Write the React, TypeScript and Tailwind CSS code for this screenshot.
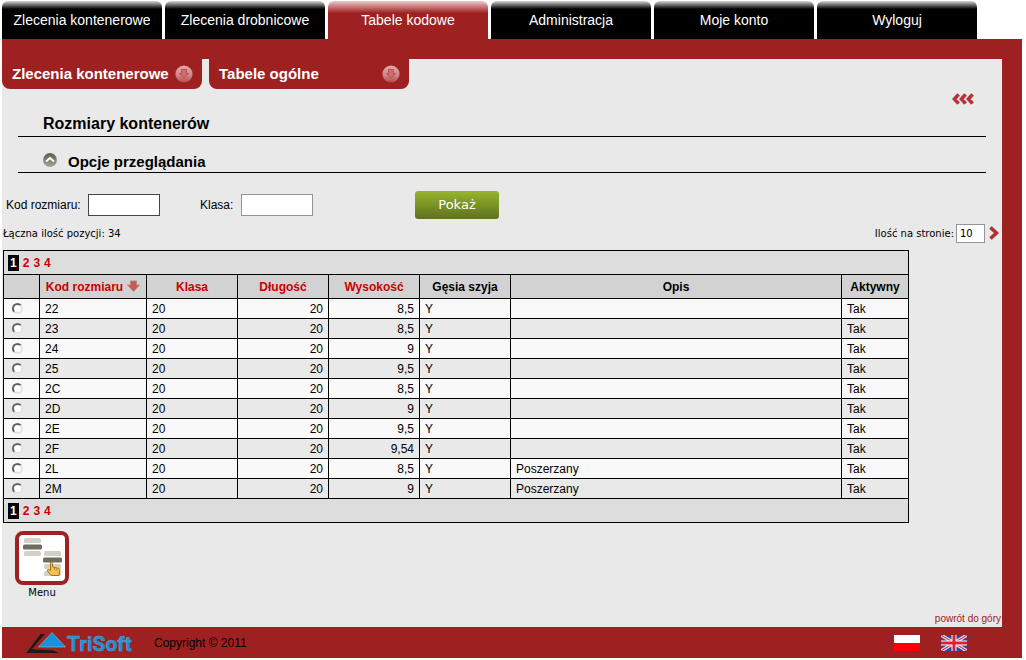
import { useState } from "react";

const tabs = [
  "Zlecenia kontenerowe",
  "Zlecenia drobnicowe",
  "Tabele kodowe",
  "Administracja",
  "Moje konto",
  "Wyloguj",
];

const subTabs = ["Zlecenia kontenerowe", "Tabele ogólne"];

const rows = [
  { code: "22", height: "8,5", desc: "" },
  { code: "23", height: "8,5", desc: "" },
  { code: "24", height: "9", desc: "" },
  { code: "25", height: "9,5", desc: "" },
  { code: "2C", height: "8,5", desc: "" },
  { code: "2D", height: "9", desc: "" },
  { code: "2E", height: "9,5", desc: "" },
  { code: "2F", height: "9,54", desc: "" },
  { code: "2L", height: "8,5", desc: "Poszerzany" },
  { code: "2M", height: "9", desc: "Poszerzany" },
];

const ArrowBadge = () => (
  <svg width="18" height="18" viewBox="0 0 18 18" aria-hidden="true">
    <defs>
      <linearGradient id="badge" x1="0" y1="0" x2="0" y2="1">
        <stop offset="0" stopColor="#dda9a9" />
        <stop offset="0.6" stopColor="#cc8485" />
        <stop offset="1" stopColor="#b04a4b" />
      </linearGradient>
    </defs>
    <circle cx="9" cy="9" r="8.6" fill="url(#badge)" />
    <path
      d="M6.5 4.5h5v4h2L9 13.500 4.500 8.500h2z"
      fill="#d2696b"
      stroke="#b04a4c"
      strokeWidth="0.8"
    />
  </svg>
);

const SortArrow = () => (
  <svg width="13" height="13" viewBox="0 0 13 13" aria-hidden="true">
    <path
      d="M3.500 1h6v4h3L6.500 11.500 .5 5h3z"
      fill="#cb5a55"
      stroke="#b98480"
      strokeWidth="0.9"
      strokeLinejoin="round"
    />
  </svg>
);

const CollapseIcon = () => (
  <svg width="14" height="14" viewBox="0 0 14 14" aria-hidden="true">
    <defs>
      <linearGradient id="collapse" x1="0" y1="0" x2="0" y2="1">
        <stop offset="0" stopColor="#5f5b4d" />
        <stop offset="1" stopColor="#a8a595" />
      </linearGradient>
    </defs>
    <circle cx="7" cy="7" r="6.9" fill="url(#collapse)" />
    <path d="M3 8.500l4-3.500 4 3.500" fill="none" stroke="#fff" strokeWidth="2" />
  </svg>
);

const BackIcon = () => (
  <svg width="22" height="12" viewBox="0 0 22 12" fill="none" aria-hidden="true">
    <g stroke="#8d6668" strokeWidth="3.800">
      <path d="M6.500 1.500L2.500 6l4 4.500M13.500 1.500L9.500 6l4 4.500M20.500 1.500L16.500 6l4 4.500" />
    </g>
    <g stroke="#d0262b" strokeWidth="2.600">
      <path d="M6.500 1.500L2.500 6l4 4.500M13.500 1.500L9.500 6l4 4.500M20.500 1.500L16.500 6l4 4.500" />
    </g>
  </svg>
);

const NextIcon = () => (
  <svg width="10" height="14" viewBox="0 0 10 14" fill="none" aria-hidden="true">
    <path d="M1.500 1.500L7.500 7l-6 5.500" stroke="#9c8283" strokeWidth="3.800" />
    <path d="M1.500 1.500L7.500 7l-6 5.500" stroke="#c2262b" strokeWidth="2.800" />
  </svg>
);

const MenuIcon = () => (
  <svg width="44" height="44" viewBox="0 0 44 44" aria-hidden="true">
    <g fill="#d3d1c6">
      <rect x="4" y="2" width="17" height="5" rx="1.500" />
      <rect x="4" y="15" width="17" height="5" rx="1.500" />
      <rect x="24" y="15" width="17" height="5" rx="1.500" />
      <rect x="24" y="28" width="17" height="5" rx="1.500" />
      <rect x="24" y="35" width="17" height="5" rx="1.500" />
    </g>
    <rect x="3" y="8.500" width="19" height="5" rx="1.500" fill="#6f6b5e" />
    <rect x="23" y="21.500" width="19" height="5" rx="1.500" fill="#6f6b5e" />
    <path
      d="M30.500 26.500c1-.8 2 0 2 1v3.500l6 1.300c1.100.3 1.500 1 1.300 2.200l-.8 5H31l-3.500-4.500c-.6-1.300.6-2 1.500-1.400l1.500 1z"
      fill="#efc352"
      stroke="#a87418"
      strokeWidth="1"
    />
    <path d="M34.500 32v2M36.800 32.500v2" stroke="#a87418" strokeWidth="0.700" />
  </svg>
);

const Logo = () => (
  <svg width="107" height="24" viewBox="0 0 107 24" role="img" aria-label="TriSoft">
    <path d="M15.500 3.500L1.500 20.500h28" fill="none" stroke="#8f6d6e" strokeWidth="1" />
    <path d="M14.500 3L19 3 6 18l22 1.500 5 2.500H0z" fill="#1d1a1b" />
    <path d="M19 7L8.500 18.500H17z" fill="#9f2021" />
    <path d="M26 1.500L39.500 16h-27z" fill="#1293dc" stroke="#a9b8cc" strokeWidth="0.600" />
    <text
      x="41"
      y="20"
      fill="#1293dc"
      stroke="#5f9cc8"
      strokeWidth="0.500"
      className="font-[Roboto,sans-serif] text-[21px] font-bold"
    >
      TriSoft
    </text>
  </svg>
);

const PolishFlag = () => (
  <svg width="26" height="16" viewBox="0 0 26 16" aria-hidden="true">
    <path fill="#fff" d="M0 0h26v8H0z" />
    <path fill="#f00" d="M0 8h26v8H0z" />
  </svg>
);

const BritishFlag = () => (
  <svg width="26" height="16" viewBox="0 0 26 16" aria-hidden="true">
    <path fill="#28469c" d="M0 0h26v16H0z" />
    <path d="M0 0l26 16M26 0L0 16" stroke="#e6e4f0" strokeWidth="3.400" />
    <path d="M0 0l26 16M26 0L0 16" stroke="#d8434f" strokeWidth="1.200" />
    <path d="M13 0v16M0 8h26" stroke="#fff" strokeWidth="5" />
    <path d="M13 0v16M0 8h26" stroke="#dc1f35" strokeWidth="3" />
  </svg>
);

const Pager = () => (
  <div className="flex items-center gap-1 font-bold leading-4">
    <span className="bg-black px-0.5 text-white">1</span>
    <div className="flex gap-1 text-[#cc0000]">
      <a href="#2">2</a>
      <a href="#3">3</a>
      <a href="#4">4</a>
    </div>
  </div>
);

const App = () => {
  const [kod, setKod] = useState("");
  const [klasa, setKlasa] = useState("");
  const [perPage, setPerPage] = useState("10");
  const [selected, setSelected] = useState("");

  return (
    <div className="bg-white pt-px pr-1 pb-0.5 pl-0.5 font-['Liberation_Sans',Arial,sans-serif] text-xs text-black">
      <nav className="flex gap-[3px]">
        {tabs.map((tab) => (
          <a
            key={tab}
            href="#"
            className={`flex h-[38px] w-40 items-center justify-center rounded-t-md text-sm text-white ${
              tab === "Tabele kodowe"
                ? "bg-[linear-gradient(#ecc9ca,#c87576_6px,#9f2021_12px)]"
                : "bg-[linear-gradient(#d5d5d5,#6a6a6a_4px,#000_8px)]"
            }`}
          >
            {tab}
          </a>
        ))}
      </nav>

      <div className="bg-[#9f2021] pt-5 pr-5">
        <main className="bg-[#e9e9e9]">
          <div className="flex gap-[7px]">
            {subTabs.map((tab) => (
              <button
                key={tab}
                className="flex h-[30px] w-[200px] items-center justify-between rounded-b-lg bg-[#9f2021] pr-[9px] pl-[10px] text-[15px] font-bold text-white"
              >
                {tab}
                <ArrowBadge />
              </button>
            ))}
          </div>

          <div className="flex justify-end pt-1 pr-7">
            <a href="#back" aria-label="Wstecz">
              <BackIcon />
            </a>
          </div>

          <div className="mr-4 ml-4">
            <h1 className="border-b border-black pt-[9px] pb-0.5 pl-[25px] text-base leading-5 font-bold">
              Rozmiary kontenerów
            </h1>
            <h2 className="flex items-center gap-[11px] border-b border-black pt-[15px] pl-[25px] text-[15px] leading-5 font-bold">
              <button aria-label="Zwiń" className="pb-1">
                <CollapseIcon />
              </button>
              Opcje przeglądania
            </h2>
          </div>

          <form
            className="flex items-center pt-[18px] pl-1"
            onSubmit={(e) => e.preventDefault()}
          >
            <label htmlFor="kod" className="w-[82px]">
              Kod rozmiaru:
            </label>
            <input
              id="kod"
              value={kod}
              onChange={(e) => setKod(e.target.value)}
              className="mr-10 h-[22px] w-[72px] border border-[#444] bg-white px-1"
            />
            <label htmlFor="klasa" className="w-[41px]">
              Klasa:
            </label>
            <input
              id="klasa"
              value={klasa}
              onChange={(e) => setKlasa(e.target.value)}
              className="h-[22px] w-[72px] border border-[#949494] bg-white px-1"
            />
            <button
              type="submit"
              className="ml-[102px] h-7 w-[84px] rounded-[3px] bg-linear-to-b from-[#96b62d] to-[#5f711f] font-['DejaVu_Sans',Verdana,sans-serif] text-[13px] text-white"
            >
              Pokaż
            </button>
          </form>

          <div className="flex items-center justify-between pt-[5px] pr-[3px] pl-px font-['DejaVu_Sans',Verdana,sans-serif] text-[10px]">
            <span>Łączna ilość pozycji: 34</span>
            <div className="flex items-center">
              <label htmlFor="perPage">Ilość na stronie:</label>
              <input
                id="perPage"
                value={perPage}
                onChange={(e) => setPerPage(e.target.value)}
                className="mr-1 ml-0.5 h-[19px] w-[29px] border border-[#949494] bg-white px-[3px]"
              />
              <button aria-label="Następna strona" className="pb-0.5">
                <NextIcon />
              </button>
            </div>
          </div>

          <div className="pt-[7px] pr-[93px] pl-px">
            <table className="w-full table-fixed border-collapse [&_td]:border [&_td]:border-black [&_th]:border [&_th]:border-black [&_tbody_td]:px-[5px]">
              <colgroup>
                <col className="w-9" />
                <col className="w-[107px]" />
                <col className="w-[91px]" />
                <col className="w-[91px]" />
                <col className="w-[91px]" />
                <col className="w-[91px]" />
                <col />
                <col className="w-[67px]" />
              </colgroup>
              <thead>
                <tr className="h-6 bg-[#dddddd]">
                  <td colSpan={8} className="px-1">
                    <Pager />
                  </td>
                </tr>
                <tr className="h-6 bg-[#d2d2d2]">
                  <th />
                  <th>
                    <a
                      href="#kod"
                      className="flex items-center justify-center gap-1 text-[#cc0000]"
                    >
                      Kod rozmiaru <SortArrow />
                    </a>
                  </th>
                  <th>
                    <a href="#klasa" className="text-[#cc0000]">
                      Klasa
                    </a>
                  </th>
                  <th>
                    <a href="#dlugosc" className="text-[#cc0000]">
                      Długość
                    </a>
                  </th>
                  <th>
                    <a href="#wysokosc" className="text-[#cc0000]">
                      Wysokość
                    </a>
                  </th>
                  <th>Gęsia szyja</th>
                  <th>Opis</th>
                  <th>Aktywny</th>
                </tr>
              </thead>
              <tbody>
                {rows.map((row) => (
                  <tr key={row.code} className="h-5 odd:bg-[#f9f9f9] even:bg-[#e9e9e9]">
                    <td>
                      <input
                        type="radio"
                        name="row"
                        aria-label={row.code}
                        checked={selected === row.code}
                        onChange={() => setSelected(row.code)}
                        className="ml-[3px] block size-[11px] appearance-none rounded-full border-2 border-[#e6e3dc] border-t-[#666] border-l-[#666] bg-white checked:bg-black"
                      />
                    </td>
                    <td>{row.code}</td>
                    <td>20</td>
                    <td className="text-right">20</td>
                    <td className="text-right">{row.height}</td>
                    <td>Y</td>
                    <td>{row.desc}</td>
                    <td>Tak</td>
                  </tr>
                ))}
              </tbody>
              <tfoot>
                <tr className="h-6 bg-[#dddddd]">
                  <td colSpan={8} className="px-1">
                    <Pager />
                  </td>
                </tr>
              </tfoot>
            </table>
          </div>

          <div className="flex pt-2 pl-[13px]">
            <button className="flex flex-col items-center gap-0.5 font-['DejaVu_Sans',Verdana,sans-serif] text-[10px] leading-3">
              <span className="rounded-lg border-4 border-[#9f2021] bg-white p-px">
                <MenuIcon />
              </span>
              Menu
            </button>
          </div>

          <div className="flex justify-end pt-3 pr-px text-[10px] leading-4">
            <a href="#top" className="text-[#9f2021]">
              powrót do góry
            </a>
          </div>
        </main>
      </div>

      <footer className="flex h-[31px] items-center bg-[#9f2021] pl-6">
        <Logo />
        <span className="ml-[21px]">Copyright © 2011</span>
        <div className="ml-auto flex gap-[21px] pr-[55px]">
          <a href="#pl" aria-label="Polski">
            <PolishFlag />
          </a>
          <a href="#en" aria-label="English">
            <BritishFlag />
          </a>
        </div>
      </footer>
    </div>
  );
};

export default App;
